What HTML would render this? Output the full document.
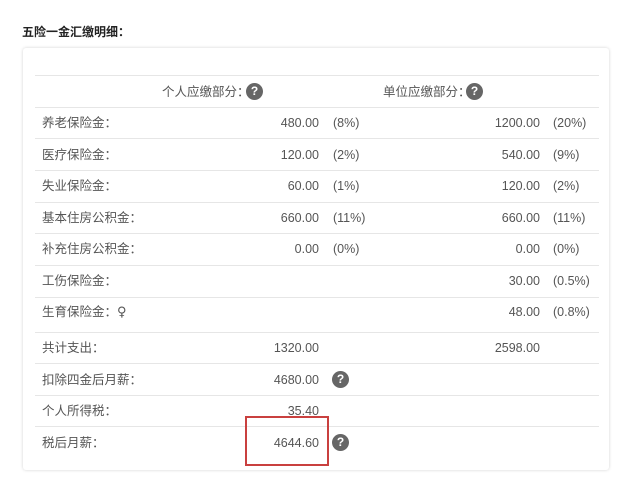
<!DOCTYPE html>
<html><head><meta charset="utf-8"><style>
body{margin:0;width:624px;height:480px;background:#fff;position:relative;overflow:hidden;font-family:"Liberation Sans","Noto Sans CJK SC",sans-serif;color:#555;font-size:12.5px}
.a{position:absolute;white-space:nowrap;line-height:16px}
.r{text-align:right}
.ln{position:absolute;left:35px;width:564px;height:1px;background:#e6e6e6}
.q{position:absolute;width:17px;height:17px;border-radius:50%;background:#666;color:#fff;font-size:12px;font-weight:bold;text-align:center;line-height:17px}
</style></head><body>
<div class="a" style="left:22px;top:24px;color:#222;font-weight:bold;font-size:12px">五险一金汇缴明细：</div>
<div style="position:absolute;left:23px;top:48px;width:586px;height:422px;background:#fff;border-radius:3px;box-shadow:0 0 3px rgba(0,0,0,.18)"></div>
<div class="ln" style="top:75px"></div>
<div class="ln" style="top:107px"></div>
<div class="ln" style="top:138px"></div>
<div class="ln" style="top:170px"></div>
<div class="ln" style="top:202px"></div>
<div class="ln" style="top:233px"></div>
<div class="ln" style="top:265px"></div>
<div class="ln" style="top:297px"></div>
<div class="ln" style="top:332px"></div>
<div class="ln" style="top:363px"></div>
<div class="ln" style="top:395px"></div>
<div class="ln" style="top:426px"></div>

<div class="a" style="left:162px;top:84px">个人应缴部分：</div><div class="q" style="left:246px;top:83px">?</div>
<div class="a" style="left:383px;top:84px">单位应缴部分：</div><div class="q" style="left:466px;top:83px">?</div>

<div class="a" style="left:42px;top:115px">养老保险金：</div>
<div class="a r" style="right:305px;top:115px">480.00</div><div class="a" style="left:333px;top:115px">(8%)</div>
<div class="a r" style="right:84px;top:115px">1200.00</div><div class="a" style="left:553px;top:115px">(20%)</div>

<div class="a" style="left:42px;top:147px">医疗保险金：</div>
<div class="a r" style="right:305px;top:147px">120.00</div><div class="a" style="left:333px;top:147px">(2%)</div>
<div class="a r" style="right:84px;top:147px">540.00</div><div class="a" style="left:553px;top:147px">(9%)</div>

<div class="a" style="left:42px;top:178px">失业保险金：</div>
<div class="a r" style="right:305px;top:178px">60.00</div><div class="a" style="left:333px;top:178px">(1%)</div>
<div class="a r" style="right:84px;top:178px">120.00</div><div class="a" style="left:553px;top:178px">(2%)</div>

<div class="a" style="left:42px;top:210px">基本住房公积金：</div>
<div class="a r" style="right:305px;top:210px">660.00</div><div class="a" style="left:333px;top:210px">(11%)</div>
<div class="a r" style="right:84px;top:210px">660.00</div><div class="a" style="left:553px;top:210px">(11%)</div>

<div class="a" style="left:42px;top:241px">补充住房公积金：</div>
<div class="a r" style="right:305px;top:241px">0.00</div><div class="a" style="left:333px;top:241px">(0%)</div>
<div class="a r" style="right:84px;top:241px">0.00</div><div class="a" style="left:553px;top:241px">(0%)</div>

<div class="a" style="left:42px;top:273px">工伤保险金：</div>
<div class="a r" style="right:84px;top:273px">30.00</div><div class="a" style="left:553px;top:273px">(0.5%)</div>

<div class="a" style="left:42px;top:304px">生育保险金：<span style="font-size:13px;font-family:'DejaVu Sans',sans-serif">♀</span></div>
<div class="a r" style="right:84px;top:304px">48.00</div><div class="a" style="left:553px;top:304px">(0.8%)</div>

<div class="a" style="left:42px;top:340px">共计支出：</div>
<div class="a r" style="right:305px;top:340px">1320.00</div>
<div class="a r" style="right:84px;top:340px">2598.00</div>

<div class="a" style="left:42px;top:372px">扣除四金后月薪：</div>
<div class="a r" style="right:305px;top:372px">4680.00</div><div class="q" style="left:332px;top:371px">?</div>

<div class="a" style="left:42px;top:403px">个人所得税：</div>
<div class="a r" style="right:305px;top:403px">35.40</div>

<div class="a" style="left:42px;top:435px">税后月薪：</div>
<div class="a r" style="right:305px;top:435px">4644.60</div><div class="q" style="left:332px;top:434px">?</div>

<div style="position:absolute;left:245px;top:416px;width:80px;height:46px;border:2px solid #c9403f"></div>
</body></html>
